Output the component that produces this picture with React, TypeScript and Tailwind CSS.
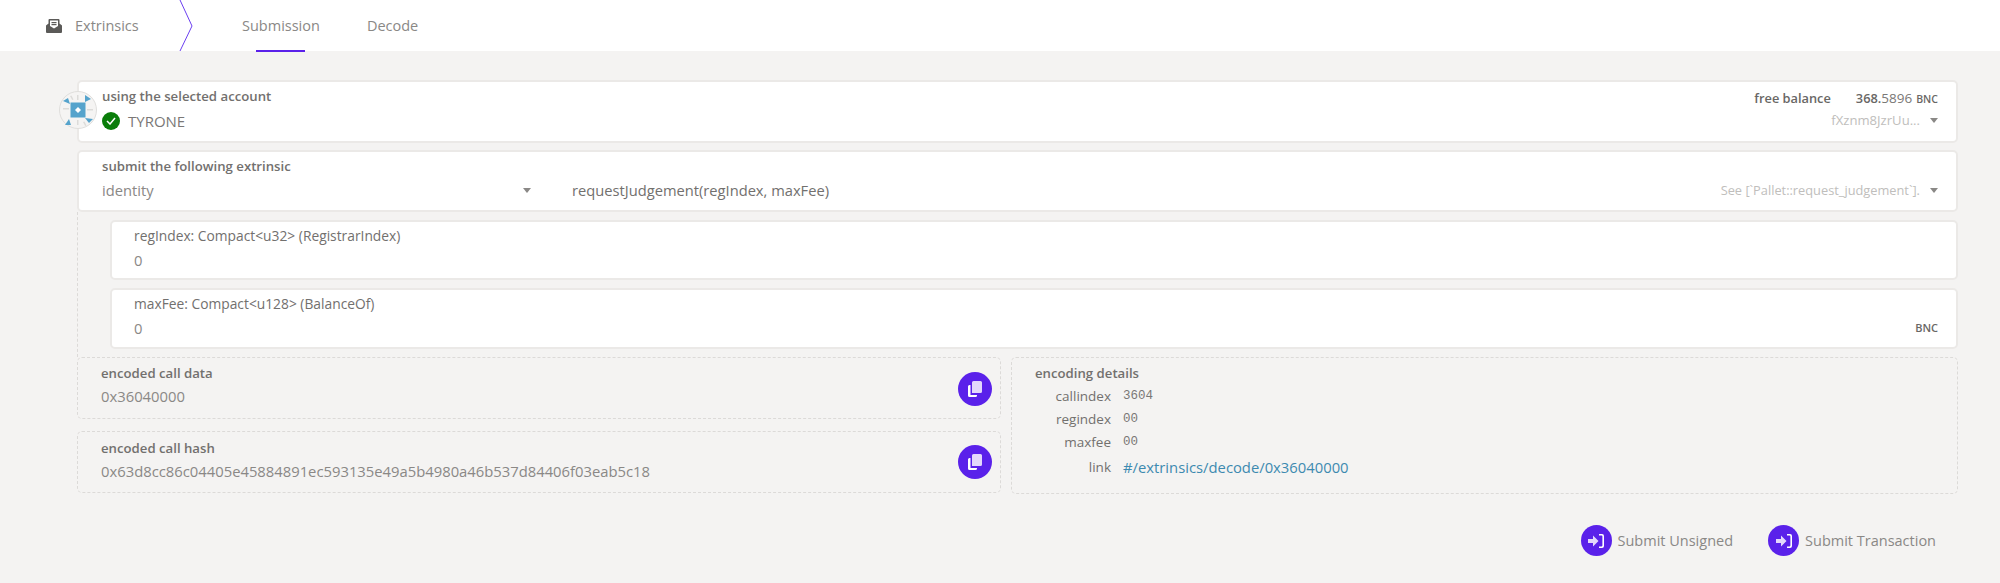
import type { ReactNode } from "react";

const font = "font-['Open_Sans','Noto_Sans',sans-serif]";

function Identicon() {
    return (
        <svg width="38" height="38" viewBox="0 0 38 38" className="absolute left-[-20px] top-[9px]">
            <circle cx="19" cy="19" r="18.5" fill="#f5f4f3" stroke="#dfdedc" />
            <g fill="#dcdbd9">
                <rect x="4" y="17" width="6" height="1.5" />
                <rect x="28" y="18" width="6" height="1.5" />
                <rect x="18" y="4" width="1.5" height="5" />
                <rect x="18" y="29" width="1.5" height="5" />
                <path d="M11 5l1.500-.5 2 4-1.300.6z" />
                <path d="M24 31l1.500-.6 2 4-1.300.6z" />
            </g>
            <rect x="11.500" y="11.500" width="15" height="15" fill="#55a3cc" />
            <path d="M16 19l3-3 3 3-3 3z" fill="#fff" />
            <g fill="#55a3cc">
                <path d="M4 10l5-3 2 6z" />
                <path d="M26 4l6 4-6 3z" />
                <path d="M6 34l4-6 2 6z" />
                <path d="M26 27l8 1-4 4z" />
            </g>
        </svg>
    );
}

function Caret() {
    return <span className="ml-[10px] mt-[1px] inline-block h-0 w-0 border-x-[4px] border-t-[5px] border-x-transparent border-t-[#8a8886]" />;
}

function CopyIcon() {
    return (
        <span className="flex h-[34px] w-[34px] items-center justify-center rounded-full bg-[#5a21ea]">
            <svg width="14" height="16" viewBox="0 0 14 16">
                <path d="M4 1.500A1.500 1.500 0 0 1 5.500 0h7A1.500 1.500 0 0 1 14 1.500v9a1.500 1.500 0 0 1-1.500 1.500H4z" fill="#e3d8fb" />
                <path d="M2.500 4H1.500A1.500 1.500 0 0 0 0 5.500v9A1.500 1.500 0 0 0 1.500 16h6A1.500 1.500 0 0 0 9 14.500V14H2.500z" fill="#fff" />
            </svg>
        </span>
    );
}

function SubmitIcon() {
    return (
        <span className="flex h-[31px] w-[31px] items-center justify-center rounded-full bg-[#5a21ea]">
            <svg width="16" height="14" viewBox="0 0 16 14">
                <path d="M0 5h5V1.500L10.500 7 5 12.500V9H0z" fill="#e3d8fb" />
                <path d="M11 0h3a2 2 0 0 1 2 2v10a2 2 0 0 1-2 2h-3v-1.600h2.600a.8.8 0 0 0 .8-.8V2.400a.8.8 0 0 0-.8-.8H11z" fill="#fff" />
            </svg>
        </span>
    );
}

function Label({ children }: { children: ReactNode }) {
    return <div className="text-[13.200px] font-semibold leading-[18px] text-[#72706e]">{children}</div>;
}

function ParamCard({ label, unit, height }: { label: string; unit?: string; height: string }) {
    return (
        <div className={`flex flex-col rounded-[5px] border-2 border-[#ebe9e7] bg-white pl-[22px] pr-[18px] pt-[5px] ${height}`}>
            <div className="text-[13.800px] font-medium leading-[18px] text-[#72706e]">{label}</div>
            <div className="mt-[5px] flex items-center justify-between">
                <span className="text-[14.800px] leading-[20px] text-[#8a8886]">0</span>
                {unit && <span className="text-[11px] font-semibold text-[#696765]">{unit}</span>}
            </div>
        </div>
    );
}

function HashBox({ label, value, iconTop, padTop }: { label: string; value: string; iconTop: string; padTop: string }) {
    return (
        <div className={`relative h-[62px] rounded-[5px] border border-dashed border-[#dcdad8] pl-[23px] ${padTop}`}>
            <Label>{label}</Label>
            <div className="mt-[4px] text-[14.800px] leading-[20px] text-[#8a8886]">{value}</div>
            <span className={`absolute right-[8px] ${iconTop}`}>
                <CopyIcon />
            </span>
        </div>
    );
}

function DetailRow({ name, value }: { name: string; value: string }) {
    return (
        <div className="flex h-[23px] items-center">
            <div className="w-[76px] text-right text-[13.500px] font-medium text-[#72706e]">{name}</div>
            <div className="ml-[12px] font-['Liberation_Mono',monospace] text-[12.500px] text-[#7a7876]">{value}</div>
        </div>
    );
}

export default function App() {
    return (
        <div className={`min-h-[583px] bg-[#f4f3f2] ${font}`}>
            <header className="flex h-[51px] items-center bg-white">
                <div className="ml-[46px] flex w-[133px] items-center gap-[13px]">
                    <svg width="16" height="15" viewBox="0 0 16 15">
                        <path d="M0 7.500 2.500 5.500V2a1 1 0 0 1 1-1h9a1 1 0 0 1 1 1v3.500L16 7.500V14a1 1 0 0 1-1 1H1a1 1 0 0 1-1-1z" fill="#5b5a58" />
                        <path d="M4 2.500h8V8l-4 2.500L4 8z" fill="#fff" />
                        <rect x="5.500" y="4" width="5" height="1.200" fill="#5b5a58" />
                        <rect x="5.500" y="6" width="5" height="1.200" fill="#5b5a58" />
                    </svg>
                    <span className="text-[14.500px] text-[#8a8886]">Extrinsics</span>
                </div>
                <svg width="14" height="51" viewBox="0 0 14 51">
                    <path d="M1 0 L13 26 L1 51" fill="none" stroke="#6b3ff0" strokeWidth="1" />
                </svg>
                <nav className="ml-[49px] flex h-full items-center gap-[47px] text-[14.500px] text-[#8a8886]">
                    <div className="relative flex h-full items-center">
                        Submission
                        <span className="absolute bottom-[-1px] left-[14px] h-[2px] w-[49px] bg-[#5a21ea]" />
                    </div>
                    <div>Decode</div>
                </nav>
            </header>

            <main className="pl-[77px] pr-[42px] pt-[29px]">
                <div className="relative flex h-[63px] justify-between rounded-[5px] border-2 border-[#ebe9e7] bg-white pl-[23px] pr-[18px] pt-[5px]">
                    <Identicon />
                    <div>
                        <Label>using the selected account</Label>
                        <div className="mt-[6px] flex items-center gap-[8px]">
                            <span className="flex h-[18px] w-[18px] items-center justify-center rounded-full bg-[#0a7d0a]">
                                <svg width="10" height="8" viewBox="0 0 10 8">
                                    <path d="M1 4l3 3 5-6" fill="none" stroke="#fff" strokeWidth="1.500" />
                                </svg>
                            </span>
                            <span className="text-[15px] leading-[20px] text-[#7a7876]">TYRONE</span>
                        </div>
                    </div>
                    <div className="mt-[2px] flex flex-col items-end">
                        <div className="flex items-baseline text-[12.800px] leading-[18px] text-[#696765]">
                            <span className="font-semibold">free balance</span>
                            <span className="ml-[25px] font-semibold">368.</span>
                            <span className="text-[13.500px] font-normal text-[#7a7876]">5896</span>
                            <span className="ml-[4px] text-[10.500px] font-semibold">BNC</span>
                        </div>
                        <div className="mt-[3px] flex items-center text-[13.100px] leading-[18px] text-[#c0bebc]">
                            fXznm8JzrUu...
                            <Caret />
                        </div>
                    </div>
                </div>

                <div className="mt-[7px] h-[62px] rounded-[5px] border-2 border-[#ebe9e7] bg-white pl-[23px] pr-[18px] pt-[5px]">
                    <Label>submit the following extrinsic</Label>
                    <div className="mt-[5px] flex items-center text-[14.700px] leading-[20px] text-[#8a8886]">
                        <div className="flex w-[434px] items-center justify-between pr-[5px]">
                            <span>identity</span>
                            <Caret />
                        </div>
                        <span className="ml-[36px] text-[#72706e]">requestJudgement(regIndex, maxFee)</span>
                        <div className="ml-auto flex items-center text-[12.800px] text-[#c0bebc]">
                            See [`Pallet::request_judgement`].
                            <Caret />
                        </div>
                    </div>
                </div>

                <div className="flex flex-col gap-[8px] border-l border-dashed border-[#dcdad8] py-[8px] pl-[32px]">
                    <ParamCard label="regIndex: Compact<u32> (RegistrarIndex)" height="h-[60px]" />
                    <ParamCard label="maxFee: Compact<u128> (BalanceOf)" unit="BNC" height="h-[61px]" />
                </div>

                <div className="flex gap-[10px]">
                    <div className="flex w-[924px] flex-col gap-[12px]">
                        <HashBox label="encoded call data" value="0x36040000" iconTop="top-[14px]" padTop="pt-[6px]" />
                        <HashBox label="encoded call hash" value="0x63d8cc86c04405e45884891ec593135e49a5b4980a46b537d84406f03eab5c18" iconTop="top-[13px]" padTop="pt-[7px]" />
                    </div>
                    <div className="h-[137px] flex-1 rounded-[5px] border border-dashed border-[#dcdad8] pl-[23px] pt-[6px]">
                        <Label>encoding details</Label>
                        <div className="mt-[3px]">
                            <DetailRow name="callindex" value="3604" />
                            <DetailRow name="regindex" value="00" />
                            <DetailRow name="maxfee" value="00" />
                            <div className="flex h-[27px] items-center">
                                <div className="w-[76px] text-right text-[13.500px] font-medium text-[#72706e]">link</div>
                                <div className="ml-[12px] text-[14.800px] text-[#3d8ab0]">#/extrinsics/decode/0x36040000</div>
                            </div>
                        </div>
                    </div>
                </div>

                <div className="mt-[31px] flex items-center justify-end gap-[35px] pr-[22px]">
                    <div className="flex items-center gap-[6px] text-[14.500px] text-[#8a8886]">
                        <SubmitIcon />
                        Submit Unsigned
                    </div>
                    <div className="flex items-center gap-[6px] text-[14.500px] text-[#8a8886]">
                        <SubmitIcon />
                        Submit Transaction
                    </div>
                </div>
            </main>
        </div>
    );
}
